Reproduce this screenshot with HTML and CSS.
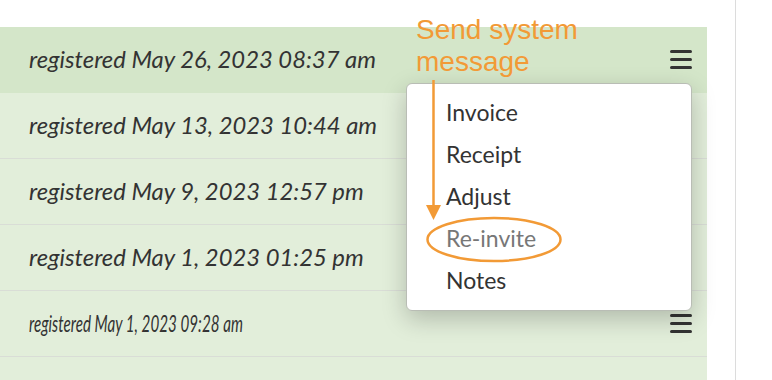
FILE: index.html
```html
<html>
<head>
<meta charset="UTF-8">
<link rel="stylesheet" href="styles.css">
<title>Members</title>
</head>
<body>
<div class="page">
    <div class="list">
        <div class="row active">
            <span class="when">registered May 26, 2023 08:37 am</span>
            <span class="burger"><i></i><i></i><i></i></span>
            <!-- dropdown for this row -->
            <div class="menu">
                <div class="item">Invoice</div>
                <div class="item">Receipt</div>
                <div class="item">Adjust</div>
                <div class="item off">Re-invite</div>
                <div class="item">Notes</div>
            </div>
        </div>
        <div class="row">
            <span class="when">registered May 13, 2023 10:44 am</span>
        </div>
        <div class="row">
            <span class="when">registered May 9, 2023 12:57 pm</span>
        </div>
        <div class="row">
            <span class="when">registered May 1, 2023 01:25 pm</span>
        </div>
        <div class="row">
            <span class="when squeezed">registered May 1, 2023 09:28 am</span>
            <span class="burger"><i></i><i></i><i></i></span>
        </div>
        <div class="row">
            <span class="when squeezed">registered April 28, 2023 10:13 am</span>
        </div>
    </div>
    <div class="gap"></div>
    <div class="side"></div>

    <!-- annotation layer -->
    <div class="note">Send system<br>message</div>
    <svg class="marks" width="772" height="380" viewBox="0 0 772 380">
        <line x1="433.5" y1="80" x2="433.5" y2="207" stroke="#f29a36" stroke-width="2.5"/>
        <polygon points="426,205 441,205 433.5,220" fill="#f29a36"/>
        <ellipse cx="494" cy="239.5" rx="66.5" ry="21.5" fill="none" stroke="#f29a36" stroke-width="2.5"/>
    </svg>
</div>
</body>
</html>
```
FILE: styles.css
```css
*{
    box-sizing: border-box;
}
body{
    margin: 0;
    background: #fff;
    font-family: Lato, "Noto Sans", sans-serif;
    color: #333;
    overflow: hidden;
}
.page{
    position: relative;
    display: grid;
    grid-template-columns: 707px 28px 1fr;
    height: 380px;
    overflow: hidden;
}
.list{
    padding-top: 27px;
}
.row{
    position: relative;
    display: flex;
    align-items: center;
    justify-content: space-between;
    height: 66px;
    padding: 0 15px 0 29px;
    background: #e2eeda;
    border-bottom: 1px solid #d9ddd6;
}
.row.active{
    background: #d4e6c9;
    border-bottom-color: #d4e6c9;
}
.when{
    font-style: italic;
    font-size: 23.8px;
    white-space: nowrap;
    margin-top: -2px;
}
.squeezed{
    transform: scaleX(0.64);
    transform-origin: left center;
}
.burger{
    display: flex;
    flex-direction: column;
    gap: 5px;
    width: 22px;
}
.burger i{
    display: block;
    height: 3px;
    border-radius: 2px;
    background: #333;
}
.menu{
    position: absolute;
    left: 406px;
    top: 56px;
    width: 286px;
    padding: 7px 0 9px;
    background: #fff;
    border: 1px solid #b9bdb5;
    border-radius: 6px;
    box-shadow: 0 8px 24px rgba(0, 0, 0, 0.22);
    z-index: 2;
}
.item{
    height: 42px;
    line-height: 42px;
    padding-left: 39px;
    font-size: 23px;
    color: #333;
}
.item.off{
    color: #777;
}
.side{
    border-left: 1px solid #dcdcdc;
}
.note{
    position: absolute;
    left: 416px;
    top: 14px;
    font-family: "Liberation Sans", Arial, sans-serif;
    font-size: 28px;
    line-height: 32px;
    color: #f29a36;
    z-index: 3;
}
.marks{
    position: absolute;
    left: 0;
    top: 0;
    z-index: 3;
}
```
